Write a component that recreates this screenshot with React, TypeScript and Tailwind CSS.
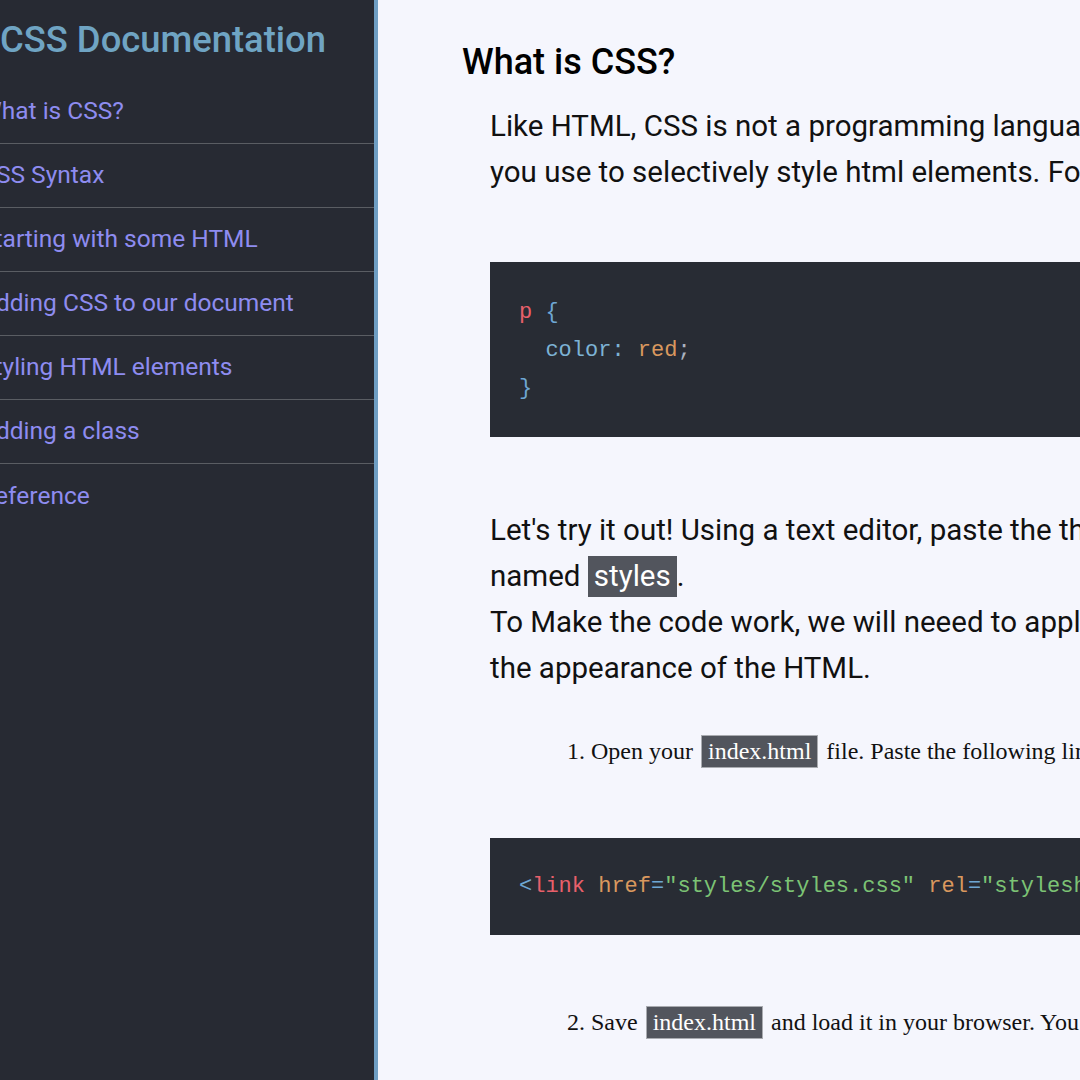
const navItems = [
  "What is CSS?",
  "CSS Syntax",
  "Starting with some HTML",
  "Adding CSS to our document",
  "Styling HTML elements",
  "Adding a class",
  "Reference",
];

function InlineCode({ children, serif }: { children: React.ReactNode; serif?: boolean }) {
  return (
    <code
      className={
        serif
          ? "mx-[2px] inline-block bg-[#52555d] px-[6px] leading-[31px] text-white border border-[#a9abb0] [font-family:'Liberation_Serif',serif]"
          : "inline-block bg-[#52555d] px-[6px] leading-[41px] text-white [font-family:Roboto,sans-serif]"
      }
    >
      {children}
    </code>
  );
}

function Sidebar() {
  return (
    <nav className="w-[378px] shrink-0 h-full bg-[#272a33] border-r-4 border-[#6f9ec3] overflow-hidden">
      <header className="h-[80px] pt-[14px]">
        <h1 className="text-[36.4px] leading-[52px] font-medium text-[#6fa4c3] whitespace-nowrap">CSS Documentation</h1>
      </header>
      <ul className="divide-y divide-[#5a5d63]">
        {navItems.map((item) => (
          <li key={item} className="h-[64px] flex items-center">
            <a className="ml-[-20px] text-[24.5px] text-[#8e8cf0] whitespace-nowrap">{item}</a>
          </li>
        ))}
      </ul>
    </nav>
  );
}

export default function App() {
  return (
    <div className="w-[1080px] h-[1080px] overflow-hidden flex bg-[#f5f6fd] [font-family:Roboto,sans-serif]">
      <Sidebar />
      <main className="flex-1 min-w-0 pl-[84px] pt-[40px] overflow-hidden">
        <section className="w-[900px]">
          <h2 className="text-[36px] leading-[44px] font-medium text-black">What is CSS?</h2>
          <div className="ml-[28px]">
            <p className="mt-[19px] text-[29.5px] leading-[46px] text-[#111] whitespace-nowrap">
              Like HTML, CSS is not a programming language. It's not a markup language either. CSS is a style sheet language.
              <br />
              you use to selectively style html elements. For example, this CSS selects paragraph text
            </p>

            <pre className="mt-[67px] bg-[#282c34] pt-[32px] pb-[29px] pl-[29px] text-[22px] leading-[38px] [font-family:'Liberation_Mono',monospace]">
              <span className="text-[#e8606b]">p</span> <span className="text-[#6ea6d3]">{"{"}</span>
              {"\n  "}
              <span className="text-[#7db3d4]">color</span>
              <span className="text-[#7db3d4]">:</span> <span className="text-[#d9985e]">red</span>
              <span className="text-[#abb2bf]">;</span>
              {"\n"}
              <span className="text-[#6ea6d3]">{"}"}</span>
            </pre>

            <p className="mt-[70px] text-[29.5px] leading-[46px] text-[#111] whitespace-nowrap">
              Let's try it out! Using a text editor, paste the three lines of CSS above into a new file
              <br />
              named <InlineCode>styles</InlineCode>.
              <br />
              To Make the code work, we will neeed to apply this CSS to your HTML document, otherwise it won't change
              <br />
              the appearance of the HTML.
            </p>

            <p className="mt-[44px] pl-[77px] text-[24px] leading-[30px] text-[#111] whitespace-nowrap [font-family:'Liberation_Serif',serif]">
              1. Open your <InlineCode serif>index.html</InlineCode> file. Paste the following line in the head
            </p>

            <pre className="mt-[70px] bg-[#282c34] pt-[30px] pb-[29px] pl-[29px] text-[22px] leading-[38px] [font-family:'Liberation_Mono',monospace]">
              <span className="text-[#6ea6d3]">&lt;</span>
              <span className="text-[#e8606b]">link</span> <span className="text-[#d9985e]">href</span>
              <span className="text-[#6ea6d3]">=</span>
              <span className="text-[#7cc374]">"styles/styles.css"</span> <span className="text-[#d9985e]">rel</span>
              <span className="text-[#6ea6d3]">=</span>
              <span className="text-[#7cc374]">"stylesheet"</span>
              <span className="text-[#6ea6d3]">&gt;</span>
            </pre>

            <p className="mt-[71px] pl-[77px] text-[24px] leading-[30px] text-[#111] whitespace-nowrap [font-family:'Liberation_Serif',serif]">
              2. Save <InlineCode serif>index.html</InlineCode> and load it in your browser. You should see the paragraph text turn red.
            </p>
          </div>
        </section>
      </main>
    </div>
  );
}
